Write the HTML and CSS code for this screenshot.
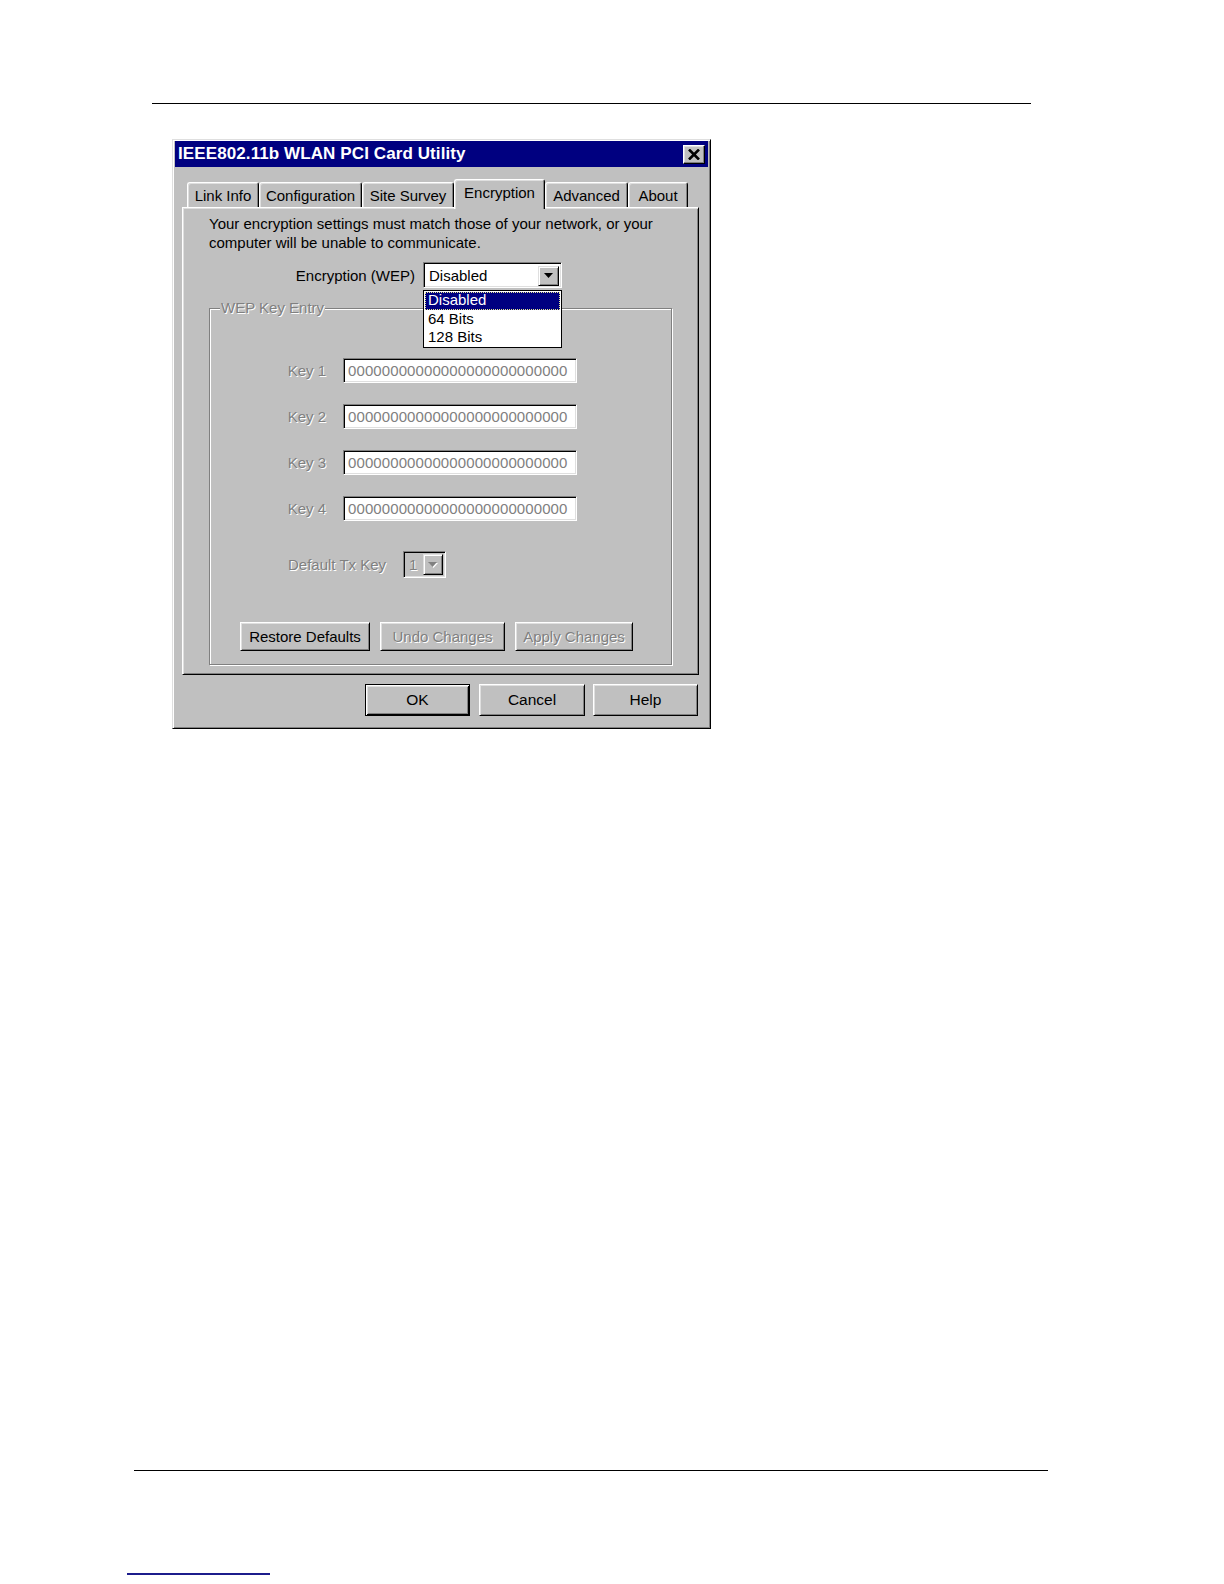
FILE: index.html
```html
<!DOCTYPE html>
<html lang="en">
<head>
<meta charset="utf-8">
<title>IEEE802.11b WLAN PCI Card Utility</title>
<link rel="stylesheet" href="styles.css">
</head>
<body>
<div class="page">
  <div class="rule-top"></div>

  <div class="dialog">
    <div class="titlebar">
      <span class="title">IEEE802.11b WLAN PCI Card Utility</span>
      <span class="close-btn">
        <svg width="12" height="11" viewBox="0 0 12 11"><path d="M1 0.5 L11 10.5 M11 0.5 L1 10.5" stroke="#000" stroke-width="2.6" fill="none"/></svg>
      </span>
    </div>

    <div class="tabs">
      <div class="tab tab-link">Link Info</div>
      <div class="tab tab-config">Configuration</div>
      <div class="tab tab-site">Site Survey</div>
      <div class="tab tab-enc selected">Encryption</div>
      <div class="tab tab-adv">Advanced</div>
      <div class="tab tab-about">About</div>
    </div>

    <div class="panel">
      <p class="intro">Your encryption settings must match those of your network, or your<br>computer will be unable to communicate.</p>

      <div class="enc-row">
        <span class="enc-label">Encryption (WEP)</span>
        <div class="combo">
          <span class="combo-text">Disabled</span>
          <span class="arrow-btn">
            <svg width="9" height="5" viewBox="0 0 9 5"><path d="M0 0 H9 L4.5 5 Z" fill="#000"/></svg>
          </span>
          <div class="droplist">
            <div class="opt active">Disabled</div>
            <div class="opt">64 Bits</div>
            <div class="opt">128 Bits</div>
          </div>
        </div>
      </div>

      <div class="group">
        <div class="legend">WEP Key Entry</div>
        <div class="keys">
          <div class="key-row"><span class="key-label">Key 1</span><div class="edit">00000000000000000000000000</div></div>
          <div class="key-row"><span class="key-label">Key 2</span><div class="edit">00000000000000000000000000</div></div>
          <div class="key-row"><span class="key-label">Key 3</span><div class="edit">00000000000000000000000000</div></div>
          <div class="key-row"><span class="key-label">Key 4</span><div class="edit">00000000000000000000000000</div></div>
        </div>
        <div class="tx-row">
          <span class="tx-label">Default Tx Key</span>
          <div class="tx-combo">
            <span class="tx-text">1</span>
            <span class="arrow-btn small">
              <svg width="10" height="6" viewBox="0 0 10 6"><path d="M1 1 H10 L5.5 6 Z" fill="#fff"/><path d="M0 0 H9 L4.5 5 Z" fill="#808080"/></svg>
            </span>
          </div>
        </div>
        <div class="btn-row">
          <div class="btn w-restore">Restore Defaults</div>
          <div class="btn w-undo disabled">Undo Changes</div>
          <div class="btn w-apply disabled">Apply Changes</div>
        </div>
      </div>
    </div>

    <div class="dlg-buttons">
      <div class="btn default w-ok">OK</div>
      <div class="btn w-cancel">Cancel</div>
      <div class="btn w-help">Help</div>
    </div>
  </div>

  <div class="rule-bottom"></div>
  <div class="link-line"></div>
</div>
</body>
</html>
```

FILE: styles.css
```css
html, body {
  margin: 0;
  padding: 0;
  background: #ffffff;
}

.page {
  width: 1224px;
  height: 1584px;
  overflow: hidden;
  font-family: "Liberation Sans", Arial, sans-serif;
  font-size: 15px;
  color: #000;
}

.rule-top {
  margin: 103px 0 0 152px;
  width: 879px;
  height: 0;
  border-top: 1px solid #000;
}

/* ---------- dialog frame ---------- */
.dialog {
  margin: 35px 0 0 172px;
  width: 539px;
  height: 590px;
  box-sizing: border-box;
  background: #c0c0c0;
  border: 1px solid;
  border-color: #dfdfdf #000 #000 #dfdfdf;
  box-shadow: inset 1px 1px 0 #fff, inset -1px -1px 0 #808080;
  padding: 1px 2px 2px 1px;
}

.titlebar {
  height: 26px;
  margin-left: 1px;
  background: #000080;
  display: flex;
  align-items: center;
  justify-content: space-between;
  padding: 0 3px 0 3px;
}

.title {
  color: #fff;
  font-weight: bold;
  font-size: 17px;
  letter-spacing: 0.1px;
  white-space: nowrap;
}

.close-btn {
  width: 22px;
  height: 19px;
  box-sizing: border-box;
  background: #c0c0c0;
  border: 1px solid;
  border-color: #fff #000 #000 #fff;
  box-shadow: inset -1px -1px 0 #808080, inset 1px 1px 0 #dfdfdf;
  display: flex;
  align-items: center;
  justify-content: center;
}

/* ---------- tabs ---------- */
.tabs {
  display: flex;
  align-items: flex-end;
  height: 30px;
  margin-top: 12px;
  margin-bottom: -2px;
  padding-left: 13px;
  position: relative;
  z-index: 1;
}

.tab {
  height: 25px;
  margin-bottom: 2px;
  box-sizing: border-box;
  background: #c0c0c0;
  border-top: 1px solid #fff;
  border-left: 1px solid #fff;
  border-right: 1px solid #000;
  border-radius: 3px 3px 0 0;
  box-shadow: inset 1px 1px 0 #dfdfdf, inset -1px 0 0 #808080;
  display: flex;
  align-items: center;
  justify-content: center;
  padding-top: 1px;
  white-space: nowrap;
}

.tab.selected {
  height: 30px;
  margin-bottom: 0;
  padding-bottom: 6px;
}

.tab-link { width: 72px; }
.tab-config { width: 103px; }
.tab-site { width: 92px; }
.tab-enc { width: 91px; }
.tab-adv { width: 83px; }
.tab-about { width: 60px; }

/* ---------- tab page ---------- */
.panel {
  margin-left: 8px;
  width: 517px;
  height: 468px;
  box-sizing: border-box;
  border: 1px solid;
  border-color: #fff #000 #000 #fff;
  box-shadow: inset 1px 1px 0 #dfdfdf, inset -1px -1px 0 #808080;
  padding: 6px 0 0 26px;
}

.intro {
  margin: 0;
  line-height: 19px;
  letter-spacing: 0;
  white-space: nowrap;
}

.enc-row {
  display: flex;
  align-items: center;
  margin-top: 10px;
  height: 26px;
}

.enc-label {
  width: 206px;
  text-align: right;
  margin-right: 8px;
  white-space: nowrap;
}

.combo {
  position: relative;
  width: 139px;
  height: 26px;
  box-sizing: border-box;
  background: #fff;
  border: 1px solid;
  border-color: #808080 #fff #fff #808080;
  box-shadow: inset 1px 1px 0 #000, inset -1px -1px 0 #dfdfdf;
  display: flex;
  align-items: center;
  justify-content: space-between;
  padding: 0 2px 0 5px;
}

.arrow-btn {
  width: 21px;
  height: 20px;
  box-sizing: border-box;
  background: #c0c0c0;
  border: 1px solid;
  border-color: #dfdfdf #000 #000 #dfdfdf;
  box-shadow: inset 1px 1px 0 #fff, inset -1px -1px 0 #808080;
  display: flex;
  align-items: center;
  justify-content: center;
  margin-top: 1px;
}

.droplist {
  position: absolute;
  left: -1px;
  top: 27px;
  width: 139px;
  height: 58px;
  box-sizing: border-box;
  background: #fff;
  border: 1px solid #000;
  padding: 1px;
  z-index: 5;
}

.opt {
  height: 18px;
  line-height: 18px;
  padding-left: 3px;
  box-sizing: border-box;
  white-space: nowrap;
}

.opt.active {
  background: #000080;
  color: #fff;
  outline: 1px dotted #e8e890;
  outline-offset: -1px;
  line-height: 16px;
}

/* ---------- group box ---------- */
.group {
  margin-top: 20px;
  width: 463px;
  height: 357px;
  box-sizing: border-box;
  border: 1px solid #808080;
  box-shadow: inset 1px 1px 0 #fff, 1px 1px 0 #fff;
}

.legend {
  width: fit-content;
  margin: -10px 0 0 10px;
  padding: 0 1px;
  height: 17px;
  line-height: 17px;
  background: #c0c0c0;
  color: #808080;
  text-shadow: 1px 1px 0 #fff;
}

.keys {
  margin-top: 42px;
  display: flex;
  flex-direction: column;
  gap: 21px;
}

.key-row {
  display: flex;
  align-items: center;
  height: 25px;
}

.key-label {
  width: 116px;
  margin-right: 17px;
  text-align: right;
  color: #808080;
  text-shadow: 1px 1px 0 #fff;
}

.edit {
  width: 234px;
  height: 25px;
  box-sizing: border-box;
  background: #fff;
  border: 1px solid;
  border-color: #808080 #fff #fff #808080;
  box-shadow: inset 1px 1px 0 #000, inset -1px -1px 0 #dfdfdf;
  color: #808080;
  line-height: 23px;
  padding-left: 4px;
  letter-spacing: 0.1px;
  overflow: hidden;
  white-space: nowrap;
}

.tx-row {
  display: flex;
  align-items: center;
  margin-top: 30px;
  height: 27px;
  padding-left: 78px;
}

.tx-label {
  width: 115px;
  color: #808080;
  text-shadow: 1px 1px 0 #fff;
  white-space: nowrap;
}

.tx-combo {
  width: 43px;
  height: 27px;
  box-sizing: border-box;
  background: #c0c0c0;
  border: 1px solid;
  border-color: #808080 #fff #fff #808080;
  box-shadow: inset 1px 1px 0 #000, inset -1px -1px 0 #dfdfdf;
  display: flex;
  align-items: center;
  justify-content: space-between;
  padding: 0 2px 0 5px;
}

.tx-text {
  color: #808080;
  text-shadow: 1px 1px 0 #fff;
}

.arrow-btn.small {
  width: 20px;
  height: 21px;
  margin-top: 0;
}

.btn-row {
  display: flex;
  gap: 10px;
  margin: 44px 0 0 30px;
}

/* ---------- buttons ---------- */
.btn {
  height: 29px;
  box-sizing: border-box;
  background: #c0c0c0;
  border: 1px solid;
  border-color: #fff #000 #000 #fff;
  box-shadow: inset 1px 1px 0 #dfdfdf, inset -1px -1px 0 #808080;
  display: flex;
  align-items: center;
  justify-content: center;
  white-space: nowrap;
}

.btn.disabled {
  color: #808080;
  text-shadow: 1px 1px 0 #fff;
}

.btn.default {
  border-color: #000;
  box-shadow: inset 1px 1px 0 #fff, inset -1px -1px 0 #000, inset 2px 2px 0 #dfdfdf, inset -2px -2px 0 #808080;
}

.w-restore { width: 130px; }
.w-undo { width: 125px; }
.w-apply { width: 118px; }

.dlg-buttons {
  display: flex;
  justify-content: flex-end;
  margin-top: 9px;
  padding-right: 10px;
}

.dlg-buttons .btn {
  height: 32px;
  font-size: 15.5px;
}

.w-ok { width: 105px; }
.w-cancel { width: 106px; margin-left: 9px; }
.w-help { width: 105px; margin-left: 8px; }

/* ---------- page footer lines ---------- */
.rule-bottom {
  margin: 741px 0 0 134px;
  width: 914px;
  height: 0;
  border-top: 1px solid #000;
}

.link-line {
  margin: 102px 0 0 127px;
  width: 143px;
  height: 2px;
  background: #1c1c8c;
}
```
